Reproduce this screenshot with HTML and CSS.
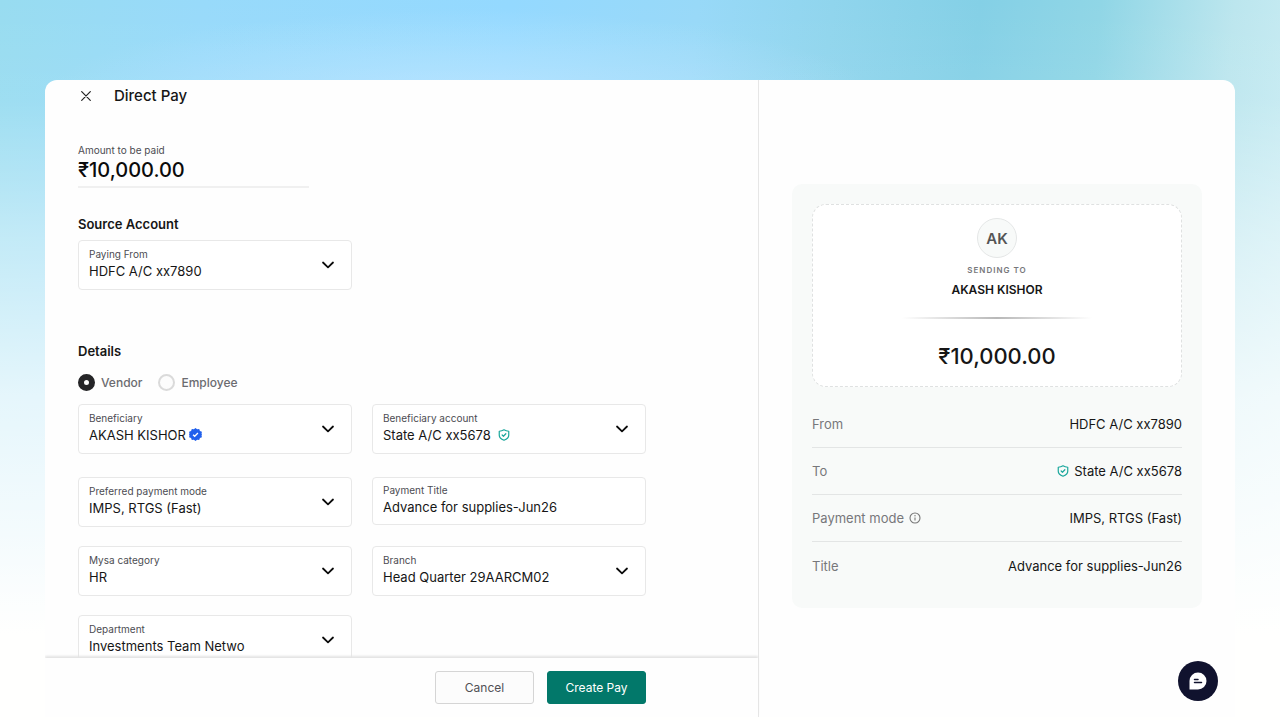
FILE: index.html
```html
<!DOCTYPE html>
<html lang="en">
<head>
<meta charset="utf-8">
<meta name="viewport" content="width=device-width, initial-scale=1">
<title>Direct Pay</title>
<link rel="stylesheet" href="styles.css">
</head>
<body>
<svg class="sprite" aria-hidden="true">
  <symbol id="chevron" viewBox="0 0 14 14"><path d="M2 4.500 7 9.300 12 4.500" fill="none" stroke="#0b0b0b" stroke-width="1.800" stroke-linecap="round" stroke-linejoin="round"/></symbol>
  <symbol id="shield" viewBox="0 0 24 24" fill="none" stroke="#1aa79c" stroke-width="2.400" stroke-linecap="round" stroke-linejoin="round"><path d="M12 1.500c2.800 1.700 6 2.700 9.500 3v8c0 4.700-4 7.800-9.500 10-5.500-2.200-9.500-5.300-9.500-10v-8c3.500-.3 6.700-1.300 9.500-3z"/><path d="m8.300 12 2.600 2.500 4.800-5"/></symbol>
</svg>
<main class="card">
  <form class="pay">
    <div class="scroll">
      <header class="top">
        <button class="close" type="button" aria-label="Close"><svg viewBox="0 0 10 10"><path d="M.7.7 9.300 9.300M9.300.7.700 9.300" fill="none" stroke="#222" stroke-width="1.200" stroke-linecap="round"/></svg></button>
        <h1 class="title">Direct Pay</h1>
      </header>
      <div class="amount">
        <label class="label" for="amount">Amount to be paid</label>
        <input class="amount-input" id="amount" type="text" value="₹10,000.00">
      </div>
      <section class="source">
        <h2 class="heading">Source Account</h2>
        <div class="grid">
          <div class="field">
            <div class="body"><label class="label" for="from">Paying From</label><div class="line"><select class="value" id="from"><option>HDFC A/C xx7890</option></select></div></div>
            <svg class="chevron" aria-hidden="true"><use href="#chevron"/></svg>
          </div>
        </div>
      </section>
      <section class="details">
        <h2 class="heading">Details</h2>
        <div class="radios">
          <label class="choice"><input class="radio" type="radio" name="kind" checked>Vendor</label>
          <label class="choice"><input class="radio" type="radio" name="kind">Employee</label>
        </div>
        <div class="grid first">
          <div class="field">
            <div class="body"><label class="label" for="ben">Beneficiary</label><div class="line"><select class="value" id="ben"><option>AKASH KISHOR</option></select>
              <svg class="badge" viewBox="0 0 24 24" aria-label="Verified"><path d="m12 0 3 2.500 3.800-.6 1.400 3.600 3.600 1.400-.6 3.800L24 12l-.8 1.300.6 3.800-3.600 1.400-1.400 3.600-3.800-.6L12 24l-3-2.500-3.800.6-1.400-3.600L.2 17.100l.6-3.800L0 12l.8-1.300-.6-3.800 3.600-1.400 1.400-3.600 3.800.6z" fill="#2160ec"/><path d="m7.500 12.300 3 2.900 6-6" fill="none" stroke="#fff" stroke-width="2.400"/></svg></div></div>
            <svg class="chevron" aria-hidden="true"><use href="#chevron"/></svg>
          </div>
          <div class="field">
            <div class="body"><label class="label" for="acct">Beneficiary account</label><div class="line wide"><select class="value" id="acct"><option>State A/C xx5678</option></select><svg class="shield" aria-label="Secure"><use href="#shield"/></svg></div></div>
            <svg class="chevron" aria-hidden="true"><use href="#chevron"/></svg>
          </div>
        </div>
        <div class="grid">
          <div class="field">
            <div class="body"><label class="label" for="mode">Preferred payment mode</label><div class="line"><select class="value" id="mode"><option>IMPS, RTGS (Fast)</option></select></div></div>
            <svg class="chevron" aria-hidden="true"><use href="#chevron"/></svg>
          </div>
          <div class="field plain">
            <div class="body"><label class="label" for="ptitle">Payment Title</label><div class="line"><input class="value" id="ptitle" type="text" value="Advance for supplies-Jun26"></div></div>
          </div>
          <div class="field">
            <div class="body"><label class="label" for="cat">Mysa category</label><div class="line"><select class="value" id="cat"><option>HR</option></select></div></div>
            <svg class="chevron" aria-hidden="true"><use href="#chevron"/></svg>
          </div>
          <div class="field">
            <div class="body"><label class="label" for="branch">Branch</label><div class="line"><select class="value" id="branch"><option>Head Quarter 29AARCM02</option></select></div></div>
            <svg class="chevron" aria-hidden="true"><use href="#chevron"/></svg>
          </div>
          <div class="field">
            <div class="body"><label class="label" for="dept">Department</label><div class="line"><select class="value" id="dept"><option>Investments Team Netwo</option></select></div></div>
            <svg class="chevron" aria-hidden="true"><use href="#chevron"/></svg>
          </div>
        </div>
      </section>
    </div>
    <footer class="actions">
      <button class="btn" type="button">Cancel</button>
      <button class="btn primary" type="submit">Create Pay</button>
    </footer>
  </form>
  <aside class="side">
    <div class="summary">
      <div class="receipt">
        <div class="avatar">AK</div>
        <div class="sending">SENDING TO</div>
        <div class="name">AKASH KISHOR</div>
        <div class="rule"></div>
        <div class="total">₹10,000.00</div>
      </div>
      <dl class="rows">
        <div class="row"><dt>From</dt><dd>HDFC A/C xx7890</dd></div>
        <div class="row"><dt>To</dt><dd><svg class="shield" aria-label="Secure"><use href="#shield"/></svg>State A/C xx5678</dd></div>
        <div class="row"><dt>Payment mode<svg class="info" viewBox="0 0 12 12" aria-hidden="true"><circle cx="6" cy="6" r="5" fill="none" stroke="#777" stroke-width="1.100"/><path d="M6 5.400v3" stroke="#777" stroke-width="1.100"/><circle cx="6" cy="3.700" r=".7" fill="#777"/></svg></dt><dd>IMPS, RTGS (Fast)</dd></div>
        <div class="row"><dt>Title</dt><dd>Advance for supplies-Jun26</dd></div>
      </dl>
    </div>
  </aside>
</main>
<button class="chat" type="button" aria-label="Open chat"><svg viewBox="0 0 18 18"><path d="M.5 17.500V9A8.500 8.500 0 1 1 9 17.500z" fill="#fff"/><path d="M5.500 7.500h3.500M5.500 10.500h7" stroke="#10122e" stroke-width="1.500" stroke-linecap="round"/></svg></button>
</body>
</html>
```

FILE: styles.css
```css
* { box-sizing: border-box; }

body {
  margin: 0;
  height: 100vh;
  display: flex;
  padding: 80px 45px 3px;
  overflow: hidden;
  font-family: Inter, "Noto Sans", sans-serif;
  font-size: 13px;
  color: #161616;
  background:
    linear-gradient(180deg, rgba(255,255,255,0) 0, rgba(255,255,255,.06) 14%, rgba(255,255,255,.4) 32%, rgba(255,255,255,.75) 55%, #fffffe 88%),
    radial-gradient(420px 90px at 460px 100px, rgba(190,230,255,.75), rgba(190,230,255,0)),
    linear-gradient(95deg, #98dcf0 0, #98dafa 15%, #94d9ff 38%, #98d9f8 52%, #90d5ed 62%, #84d0e6 73%, #90d6e6 82%, #bce6ee 92%, #cceef5 100%);
}

h1, h2, dl, dd { margin: 0; }
button, input, select { font: inherit; color: inherit; }
svg { display: block; flex: none; }
.sprite { position: absolute; width: 0; height: 0; }

.card {
  flex: 1;
  min-width: 0;
  display: grid;
  grid-template-columns: 3fr 2fr;
  background: #fefefe;
  border-radius: 12px 12px 0 0;
  overflow: hidden;
}

.pay {
  min-width: 0;
  min-height: 0;
  display: flex;
  flex-direction: column;
  border-right: 1px solid #e6e6e6;
}

.scroll {
  flex: 1;
  min-height: 0;
  overflow: hidden;
  padding: 6px 112px 0 33px;
}

.top { display: flex; align-items: center; gap: 20px; height: 20px; }
.close { width: 16px; height: 16px; padding: 3px; border: 0; background: none; }
.close svg { width: 10px; height: 10px; }
.title { font-size: 15px; line-height: 20px; font-weight: 500; }

.amount { width: 231px; margin-top: 38px; border-bottom: 2px solid #f0f0f0; }
.label { display: block; font-size: 10px; line-height: 12px; color: #4c4c52; }
.amount-input {
  display: block; width: 100%; height: 30px; padding: 0 0 2px; border: 0; background: none;
  font-size: 20px; line-height: 28px; font-weight: 500; color: #0b0b0b;
}

.heading { font-size: 13px; line-height: 20px; font-weight: 600; }
.source { margin-top: 26px; }
.source .grid { margin-top: 6px; }
.details { margin-top: 51px; }

.radios { display: flex; gap: 16px; margin-top: 13px; }
.choice { display: flex; align-items: center; gap: 6px; font-size: 12px; line-height: 17px; font-weight: 500; color: #6b6b70; }
.radio { appearance: none; width: 17px; height: 17px; margin: 0; border: 2px solid #dadada; border-radius: 50%; background: #fcfcfc; }
.radio:checked { border: 6px solid #252527; background: #fff; }

.grid { display: grid; grid-template-columns: 1fr 1fr; gap: 19px 20px; align-items: start; }
.first { margin: 13px 0 23px; }

.field {
  height: 50px;
  display: flex;
  justify-content: space-between;
  align-items: center;
  padding: 0 16px 0 10px;
  border: 1px solid #e8e8e8;
  border-radius: 4px;
  background: #fff;
}
.plain { height: 48px; }
.body { display: grid; min-width: 0; padding-bottom: 1px; }
.plain .body { flex: 1; }
.line { display: flex; align-items: center; gap: 3px; }
.wide { gap: 7px; }
.value { appearance: none; display: block; height: 22px; padding: 0; border: 0; background: none; font-size: 13px; line-height: 22px; }
input.value { width: 100%; }
.chevron { width: 14px; height: 14px; }
.badge { width: 13px; height: 13px; }
.shield { width: 12px; height: 12px; }

.actions {
  display: flex;
  justify-content: flex-end;
  gap: 13px;
  padding: 13px 112px 13px 33px;
  background: #fefefe;
  box-shadow: 0 -2px 2px #e4e4e4;
}
.btn { min-width: 99px; height: 33px; border: 1px solid #d5d5d5; border-radius: 3px; background: #fcfcfc; font-size: 12px; color: #505055; }
.primary { border-color: #02786a; background: #02786a; color: #fff; }

.side { min-width: 0; display: flex; align-items: center; padding: 0 33px 5px; }
.summary { flex: 1; padding: 20px 20px 19px; background: #f8faf9; border-radius: 10px; }
.receipt {
  display: flex;
  flex-direction: column;
  align-items: center;
  padding: 13px 0 14px;
  border: 1px dashed #dfe1e1;
  border-radius: 14px;
  background: #fff;
}
.avatar { width: 40px; height: 40px; border: 1px solid #e4e6e6; border-radius: 50%; background: #f8faf9; display: grid; place-items: center; font-size: 15px; font-weight: 600; color: #555; }
.sending { margin-top: 6px; font-size: 8px; line-height: 12px; font-weight: 600; letter-spacing: 1px; color: #77777b; }
.name { margin-top: 5px; font-size: 12px; line-height: 18px; font-weight: 600; }
.rule { width: 190px; height: 2px; margin-top: 18px; background: linear-gradient(90deg, transparent, #b8b8b8 50%, transparent); }
.total { margin-top: 21px; font-size: 22px; line-height: 32px; font-weight: 500; }

.rows { margin-top: 14px; }
.row { display: flex; justify-content: space-between; height: 47px; border-bottom: 1px solid #e3e5e5; }
.row:last-child { border-bottom: 0; }
.row dt, .row dd { display: flex; align-items: center; gap: 5px; }
.row dt { color: #77777b; }
.info { width: 12px; height: 12px; }

.chat { position: fixed; right: 62px; bottom: 19px; width: 40px; height: 40px; padding: 11px; border: 0; border-radius: 50%; background: #10122e; }
.chat svg { width: 18px; height: 18px; }
```
